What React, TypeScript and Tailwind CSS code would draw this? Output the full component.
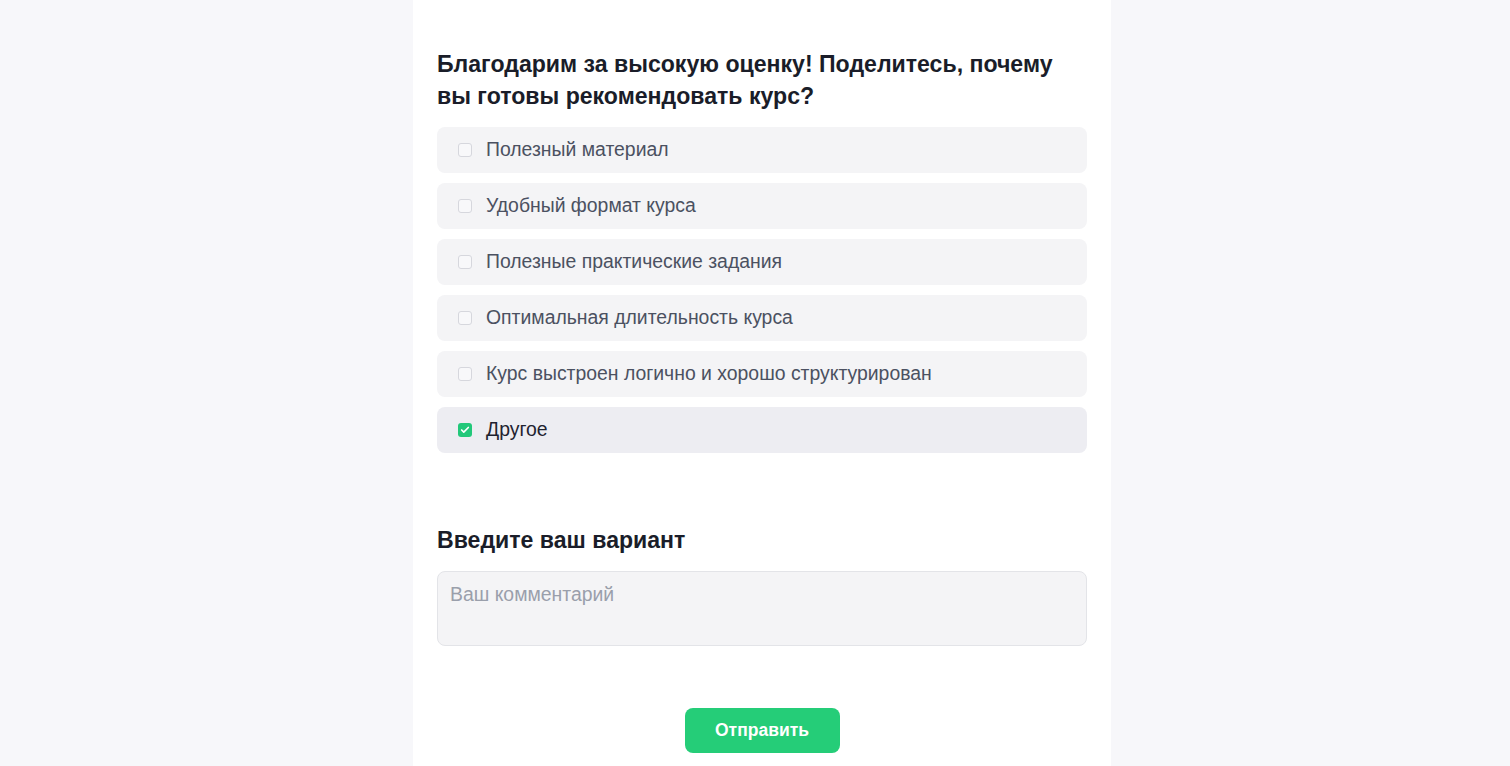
import { Check } from 'lucide-react';

const options = [
  { label: 'Полезный материал', checked: false },
  { label: 'Удобный формат курса', checked: false },
  { label: 'Полезные практические задания', checked: false },
  { label: 'Оптимальная длительность курса', checked: false },
  { label: 'Курс выстроен логично и хорошо структурирован', checked: false },
  { label: 'Другое', checked: true },
];

export default function App() {
  return (
    <div
      className="min-h-screen bg-[#f7f7fa] flex justify-center pl-[14px]"
      style={{ fontFamily: '"Liberation Sans", Arial, sans-serif' }}
    >
      <div className="w-[698px] bg-white px-6 pt-[48px] pb-4">
        <h2 className="max-w-[635px] text-[23.1px] leading-[32px] font-bold text-[#1a1d29]">
          Благодарим за высокую оценку! Поделитесь, почему вы готовы рекомендовать курс?
        </h2>

        <div className="mt-[15px] flex flex-col gap-[10px]">
          {options.map((o) => (
            <label
              key={o.label}
              className={`flex items-center h-[46px] rounded-lg pl-[21px] cursor-pointer ${
                o.checked ? 'bg-[#ededf2]' : 'bg-[#f4f4f6]'
              }`}
            >
              {o.checked ? (
                <span className="w-[14px] h-[14px] rounded-[3px] bg-[#22c87a] flex items-center justify-center">
                  <Check className="w-[10px] h-[10px] text-white" strokeWidth={4} />
                </span>
              ) : (
                <span className="w-[14px] h-[14px] rounded-[3px] border border-[#d6d7dd] bg-[#f8f8fa]" />
              )}
              <span
                className={`ml-[14px] text-[19.4px] ${
                  o.checked ? 'text-[#1f2330]' : 'text-[#4b5161]'
                }`}
              >
                {o.label}
              </span>
            </label>
          ))}
        </div>

        <h3 className="mt-[71px] text-[23.1px] leading-[32px] font-bold text-[#1a1d29]">
          Введите ваш вариант
        </h3>

        <textarea
          placeholder="Ваш комментарий"
          className="mt-[15px] block w-full h-[75px] rounded-lg border border-[#e3e4e8] bg-[#f4f4f6] px-3 py-[10px] text-[19.4px] leading-[24px] text-[#1f2330] placeholder:text-[#9a9fab] resize-none outline-none"
        />

        <div className="mt-[62px] flex justify-center">
          <button className="w-[155px] h-[45px] rounded-lg bg-[#25cd78] text-white font-bold text-[17.5px]">
            Отправить
          </button>
        </div>
      </div>
    </div>
  );
}
